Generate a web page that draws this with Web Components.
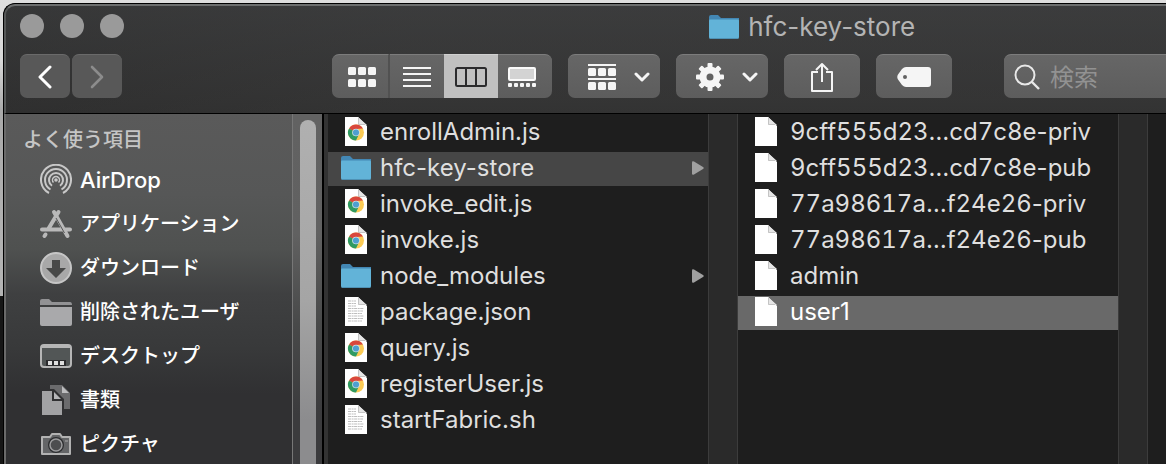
<!DOCTYPE html>
<html lang="ja">
<head>
<meta charset="utf-8">
<title>hfc-key-store</title>
<style>
html,body{height:100%;margin:0}
body{font-family:Inter,"Noto Sans CJK JP",sans-serif;background:linear-gradient(#dedede,#d8d8d8 60px,#aaa 110px,#b4b4b4 296px,#161616 296px);overflow:hidden}
.id{font-variant-numeric:tabular-nums}
</style>
</head>
<body>
<finder-window>
  <finder-titlebar slot="head">hfc-key-store</finder-titlebar>
  <finder-toolbar slot="head"></finder-toolbar>
  <finder-sidebar slot="body" heading="よく使う項目">
    <side-item icon="airdrop">AirDrop</side-item>
    <side-item icon="apps">アプリケーション</side-item>
    <side-item icon="download">ダウンロード</side-item>
    <side-item icon="sfolder">削除されたユーザ</side-item>
    <side-item icon="desktop">デスクトップ</side-item>
    <side-item icon="docs">書類</side-item>
    <side-item icon="camera">ピクチャ</side-item>
  </finder-sidebar>
  <file-column slot="body">
    <file-row icon="chrome">enrollAdmin.js</file-row>
    <file-row icon="folder" open folder>hfc-key-store</file-row>
    <file-row icon="chrome">invoke_edit.js</file-row>
    <file-row icon="chrome">invoke.js</file-row>
    <file-row icon="folder" folder>node_modules</file-row>
    <file-row icon="text">package.json</file-row>
    <file-row icon="chrome">query.js</file-row>
    <file-row icon="chrome">registerUser.js</file-row>
    <file-row icon="text">startFabric.sh</file-row>
  </file-column>
  <file-column slot="body">
    <file-row icon="page"><span class="id">9cff555d23…cd7c8e</span>-priv</file-row>
    <file-row icon="page"><span class="id">9cff555d23…cd7c8e</span>-pub</file-row>
    <file-row icon="page"><span class="id">77a98617a…f24e26</span>-priv</file-row>
    <file-row icon="page"><span class="id">77a98617a…f24e26</span>-pub</file-row>
    <file-row icon="page">admin</file-row>
    <file-row icon="page" selected>user1</file-row>
  </file-column>
</finder-window>
<script>
const page = '<path d="M0 0H13L22 9V29H0Z" fill="#fff"/><path d="M13 0V8H22Z" fill="#e6e6e6"/><path d="M13.500 1V7.500H20" fill="none" stroke="#c4c4c4"/>';
let lines = '';
for (let i = 0; i < 9; i++) lines += `<path d="M3 ${4 + i * 2.5}H${i < 3 ? 11 : 19 - (i % 3)}" stroke="#bdbdbd" stroke-dasharray="3 .6 2 .5"/>`;
const teeth = [0,45,90,135,180,225,270,315].map(a => `<rect x="11.500" y="0" width="5" height="8" rx="1" transform="rotate(${a} 14 14)"/>`).join('');
const squares = y => [0,10,20].map(x => `<rect x="${x}" y="${y}" width="8" height="8" rx="1.500"/>`).join('');
const ICONS = {
  back:[14,24,'<path d="M12 2L2 12L12 22" fill="none" stroke="#fff" stroke-width="3" stroke-linecap="round" stroke-linejoin="round"/>'],
  forward:[14,24,'<path d="M2 2L12 12L2 22" fill="none" stroke="#8c8c8c" stroke-width="2.600" stroke-linecap="round" stroke-linejoin="round"/>'],
  grid:[28,20,'<g fill="#f5f5f5">'+squares(0)+squares(12)+'</g>'],
  list:[28,20,'<path d="M0 1H28M0 7H28M0 13H28M0 19H28" stroke="#f5f5f5" stroke-width="2"/>'],
  columns:[32,20,'<rect x="1" y="1" width="30" height="18" rx="1.500" fill="none" stroke="#2b2b2d" stroke-width="2"/><path d="M11 1V19M21 1V19" stroke="#2b2b2d" stroke-width="2"/>'],
  gallery:[28,20,'<rect x="1" y="1" width="26" height="12" rx="1" fill="#d3d3d3" stroke="#fafafa" stroke-width="2"/><g fill="#f5f5f5">'+[0,6,12,18,24].map(x=>`<rect x="${x}" y="16" width="4" height="4" rx="1"/>`).join('')+'</g>'],
  group:[28,26,'<g fill="#f5f5f5"><path d="M0 0H28V2H0ZM0 14H28V16H0Z"/>'+squares(4)+squares(18)+'</g>'],
  down:[16,10,'<path d="M2 2L8 8L14 2" fill="none" stroke="#f5f5f5" stroke-width="3" stroke-linecap="round" stroke-linejoin="round"/>'],
  gear:[28,28,'<g fill="#f5f5f5">'+teeth+'<circle cx="14" cy="14" r="7" fill="none" stroke="#f5f5f5" stroke-width="7"/></g>'],
  share:[22,30,'<path d="M7 10H1V29H21V10H15M11 20V2M5 8L11 2L17 8" fill="none" stroke="#f5f5f5" stroke-width="2" stroke-linejoin="round"/>'],
  tag:[34,20,'<path fill-rule="evenodd" d="M9 0H31Q34 0 34 3V17Q34 20 31 20H9Q7 20 5 18L1 12.500Q-.5 10 1 7.500L5 2Q7 0 9 0ZM8 8A2 2 0 1 0 8 12A2 2 0 1 0 8 8Z" fill="#f5f5f5"/>'],
  search:[26,26,'<circle cx="11" cy="11" r="9.500" fill="none" stroke="#e8e8e8" stroke-width="2"/><path d="M18 18L25 25" stroke="#e8e8e8" stroke-width="2.400"/>'],
  folder:[30,24,'<path d="M0 2Q0 0 2 0H9L12 3H30V22H0Z" fill="#4387b4"/><path d="M0 5.500Q0 4.500 1 4.500H29Q30 4.500 30 5.500V22Q30 24 28.500 24H1.500Q0 24 0 22Z" fill="#62b3d8"/><path d="M1 23.500H29" stroke="#4f91b4"/>'],
  page:[22,29,page],
  text:[22,29,page+lines],
  chrome:[22,29,page+'<circle cx="11" cy="15.500" r="8" fill="#fbcb55"/><path d="M11 15.500L4.070 11.500A8 8 0 0 1 17.930 11.500L11 12Z" fill="#d9473d"/><path d="M4.070 11.500A8 8 0 0 0 11 23.500L14 17Z" fill="#2f9a62"/><circle cx="11" cy="15.500" r="3.800" fill="#d5e3ea"/><circle cx="11" cy="15.500" r="3.100" fill="#4f9fd0"/>'],
  airdrop:[32,32,'<g fill="none" stroke="#c8c8c8" stroke-width="2"><path d="M9 29A15 15 0 1 1 23 29"/><path d="M10.500 25.500A11 11 0 1 1 21.500 25.500"/><path d="M12 21.700A7 7 0 1 1 20 21.700"/></g><path d="M13.500 18.500A3.500 3.500 0 1 1 18.500 18.500" fill="none" stroke="#c8c8c8" stroke-width="1.500"/><circle cx="16" cy="16" r="1.800" fill="#c8c8c8"/>'],
  apps:[32,30,'<g stroke="#b9b9b9" stroke-width="4" stroke-linecap="round"><path d="M14 3L27.500 27M18.500 3L8 20.500M2 20.500H30M5.500 25.500L4.500 27"/></g><path d="M16 9L24.500 24" stroke="#565656"/>'],
  download:[32,32,'<circle cx="16" cy="16" r="15" fill="#a8a8a8" stroke="#c6c6c6" stroke-width="2"/><path d="M12 8H20V16H26L16 26L6 16H12Z" fill="#484948"/>'],
  sfolder:[32,27,'<path d="M0 2Q0 0 2 0H9L12 3H30Q32 3 32 6H0Z" fill="#929294"/><path d="M0 8H32V25Q32 27 30 27H2Q0 27 0 25Z" fill="#a9a9ab"/>'],
  desktop:[32,24,'<rect x="1" y="1" width="30" height="22" rx="3" fill="#525656" stroke="#b6b6b6" stroke-width="2"/><path d="M2 2.500H30" stroke="#b6b6b6" stroke-width="3"/><path d="M6 16H26V22H6Z" fill="#2c2c2e"/><path d="M8 19H24" stroke="#dedede" stroke-width="4" stroke-dasharray="4 2"/>'],
  docs:[28,30,'<path d="M8 0H20L28 8V24H22V14L12 4H8Z" fill="#6b6b6d"/><path d="M20 1V8H27Z" fill="#bcbcbe"/><path d="M0 6H10V16H20V30H0Z" fill="#a2a2a4"/><path d="M12 7L19 14H12Z" fill="#b6b6b8"/>'],
  camera:[30,22,'<path d="M1 4H9L11 1H19L21 4H29V21H1Z" fill="#646567" stroke="#b2b2b2" stroke-width="2" stroke-linejoin="round"/><circle cx="15" cy="12" r="8" fill="#2c2d2f"/><circle cx="15" cy="12" r="6" fill="#4c4d4f" stroke="#9c9c9e" stroke-width="1.500"/><path d="M24 8H27" stroke="#aaa"/>'],
  arrow:[12,14,'<path d="M0 1.500Q0-.5 2 .5L11 6Q12.500 7 11 8L2 13.500Q0 14.500 0 12.500Z" fill="#a0a0a0"/>']
};
const svg = n => { const [w,h,b] = ICONS[n]; return `<svg width="${w}" height="${h}" viewBox="0 0 ${w} ${h}" aria-hidden="true">${b}</svg>`; };
const define = (name, render) => customElements.define(name, class extends HTMLElement {
  connectedCallback() {
    if (this.shadowRoot) return;
    const t = document.createElement('template');
    t.innerHTML = '<style>*{box-sizing:border-box}svg{display:block;flex:none}</style>' + render(this);
    this.attachShadow({mode:'open'}).append(t.content.cloneNode(true));
  }
});
define('finder-window', () => `<style>
:host{display:block;height:100%;padding:3px 0 0 3px;box-sizing:border-box}
.win{height:100%;display:flex;flex-direction:column;border:solid #000;border-width:1px 0 0 1px;border-radius:12px 0 0 0;overflow:hidden;background:#1e1e1e}
header{border-top:2px solid #6c6e6e;border-left:2px solid #555757;border-radius:11px 0 0 0;border-bottom:1px solid #000;background:linear-gradient(100deg,#2c2c2c55,#3a3a3a55 35%),linear-gradient(#3c3d3e,#303030)}
main{flex:1;min-height:0;display:flex}
.rest{flex:1}
</style><div class="win"><header><slot name="head"></slot></header><main><slot name="body"></slot><div class="rest"></div></main></div>`);
define('finder-titlebar', () => `<style>
:host{display:flex;align-items:center;height:40px;padding-left:14px}
.lights{display:flex;gap:16px}
.lights button{width:24px;height:24px;border:0;border-radius:50%;padding:0;background:#9a9a9a}
.a{flex:7}.b{flex:3}
h1{margin:0;padding-top:2px;display:flex;align-items:center;gap:9px;font-size:26px;line-height:30px;font-weight:400;color:#b4b4b4;white-space:nowrap}
</style><div class="lights"><button aria-label="閉じる"></button><button aria-label="しまう"></button><button aria-label="拡大"></button></div><div class="a"></div><h1>${svg('folder')}<slot></slot></h1><div class="b"></div>`);
define('finder-toolbar', () => `<style>
:host{display:flex;align-items:center;padding:8px 0 15px 14px}
button,label{display:flex;align-items:center;justify-content:center;height:44px;padding:0;border:0;border-top:1px solid #7c7c7c;border-radius:7px;background:linear-gradient(#666,#5d5d5d);flex:none}
.nav,.seg,.tools{display:flex;flex:none}
.nav{gap:2px}.nav button{width:50px;background:#585858;border-top-color:#6a6a6a}
.gap{flex:0 1 210px}
.seg button{width:54px;border-radius:0}
.seg button:first-child{width:58px;border-radius:7px 0 0 7px;border-right:2px solid #515151;padding-left:4px}
.seg button:last-child{border-radius:0 7px 7px 0;padding-right:6px}
.seg button[aria-pressed=true]{background:#c0c0c0;border-top-color:#d0d0d0}
.tools{gap:16px;margin-left:16px}
.tools button{width:76px}
.tools .menu{width:92px;justify-content:space-between;padding:0 10px 0 20px}
label{flex:1;min-width:100px;margin-left:52px;border-radius:7px 0 0 7px;justify-content:flex-start;gap:10px;padding-left:10px}
input{flex:1;min-width:0;border:0;padding:0 0 2px;background:none;color:#eee;font:24px/32px "Noto Sans CJK JP",sans-serif;outline:0}
input::placeholder{color:#929292;opacity:1}
</style><div class="nav"><button aria-label="戻る">${svg('back')}</button><button aria-label="進む">${svg('forward')}</button></div><div class="gap"></div>
<div class="seg"><button aria-label="アイコン">${svg('grid')}</button><button aria-label="リスト">${svg('list')}</button><button aria-label="カラム" aria-pressed="true">${svg('columns')}</button><button aria-label="ギャラリー">${svg('gallery')}</button></div>
<div class="tools"><button class="menu" aria-label="グループ">${svg('group')}${svg('down')}</button><button class="menu" aria-label="アクション">${svg('gear')}${svg('down')}</button><button aria-label="共有">${svg('share')}</button><button aria-label="タグ">${svg('tag')}</button></div>
<label>${svg('search')}<input type="search" placeholder="検索" aria-label="検索"></label>`);
define('finder-sidebar', el => `<style>
:host{display:flex;flex:none;width:324px;box-sizing:border-box;border-left:2px solid #6a6a6a;background:linear-gradient(#5a5a5a,#565757 80px,#4f5150 135px,#3f4041 180px,#38393a 235px,#303032 280px);border-right:4px solid #333}
nav{flex:1;padding:8px 0 0 17px}
h2{margin:0;font-size:20px;line-height:36px;font-weight:500;color:#c5c5c5}
.track{width:32px;padding:6px 8px 0 7px;border-left:1px solid #777;border-right:2px solid #000;background:linear-gradient(#626262,#616161 120px,#484949 210px,#3b3b3d 300px)}
.thumb{width:16px;height:100%;border-radius:8px 8px 0 0;background:linear-gradient(#b0b0b0,#a5a5a5 180px,#8c8c8e 300px)}
</style><nav><h2>${el.getAttribute('heading')}</h2><slot></slot></nav><div class="track"><div class="thumb"></div></div>`);
define('side-item', el => `<style>
:host{display:block}
a{display:flex;align-items:center;gap:8px;height:44px;padding-left:17px;color:#fff;text-decoration:none;font-size:20px;font-weight:500;line-height:30px;white-space:nowrap}
.i{width:32px;display:flex;justify-content:center}
.latin{font-size:22px}
</style><a href="#"><span class="i">${svg(el.getAttribute('icon'))}</span><span class="${/^[A-Za-z]/.test(el.textContent)?'latin':''}"><slot></slot></span></a>`);
define('file-column', () => `<style>
:host{display:flex;flex:none;width:410px}
.list{flex:1;padding-top:2px;display:flex;flex-direction:column;gap:2px}
.gutter{width:30px;background:#2a2a2a;border:solid #3c3c3c;border-width:0 1px}
</style><div class="list" role="listbox"><slot></slot></div><div class="gutter"></div>`);
define('file-row', el => `<style>
:host{display:flex;align-items:center;gap:9px;height:34px;padding:0 4px 3px 13px;box-sizing:border-box;color:#dfdfdf;font-size:24px;line-height:30px;white-space:nowrap}
:host([open]){background:#464646}
:host([selected]){background:#696969;color:#fff}
.i{width:30px;display:flex;justify-content:center;flex:none}
.t{flex:1}
</style><span class="i">${svg(el.getAttribute('icon'))}</span><span class="t"><slot></slot></span>${el.hasAttribute('folder')?svg('arrow'):''}`);
</script>
</body>
</html>
